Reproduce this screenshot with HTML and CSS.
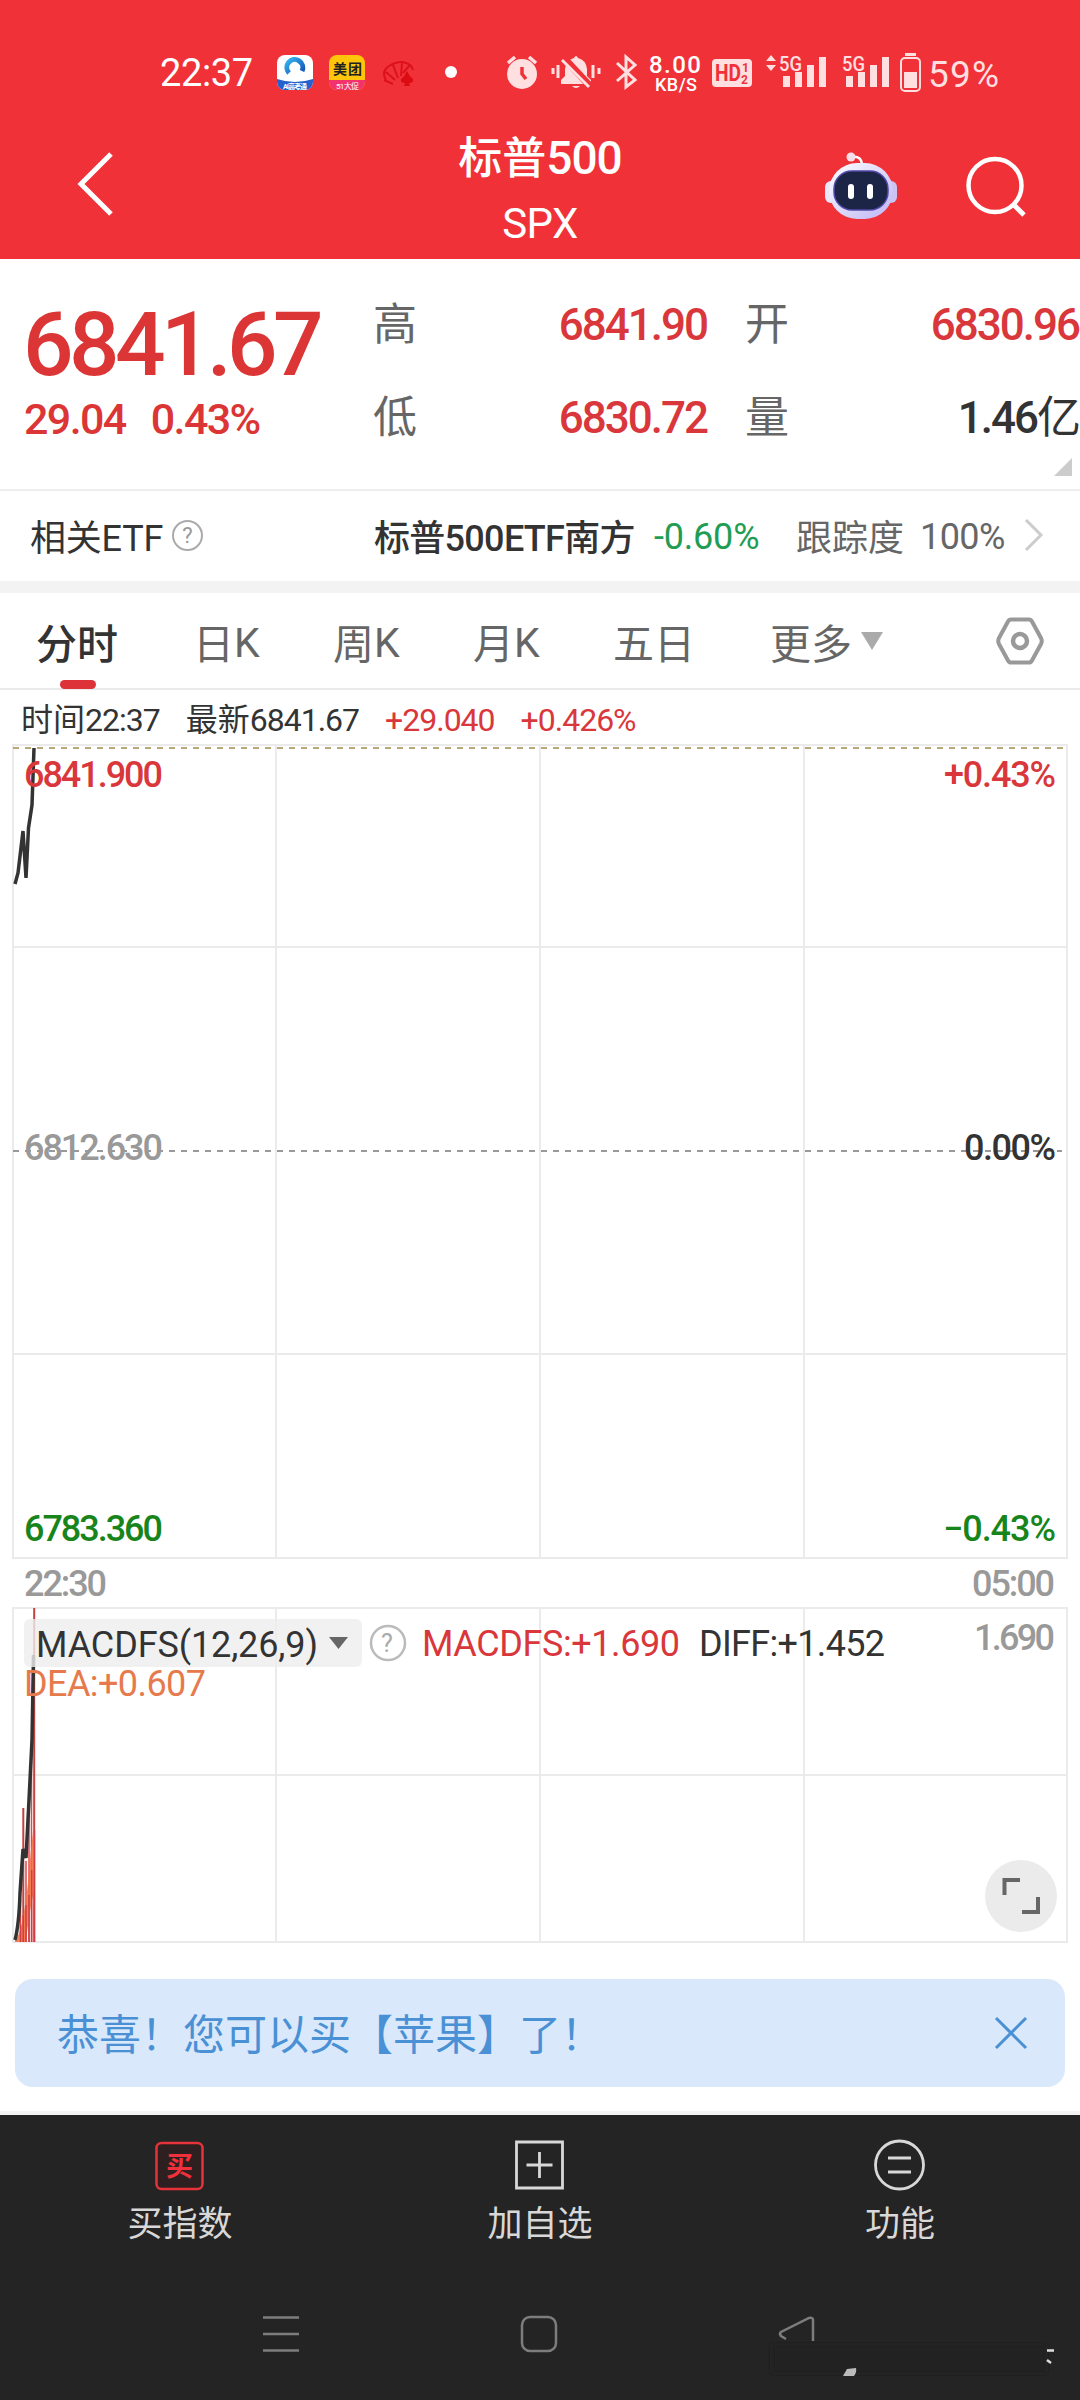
FILE: index.html
```html
<!DOCTYPE html>
<html lang="zh-CN">
<head>
    <meta charset="UTF-8">
    <meta name="viewport" content="width=device-width, initial-scale=1.0">
    <title>标普500 SPX</title>
    <link rel="stylesheet" href="styles.css">
</head>
<body>
    <header class="top">
        <svg class="status" width="1080" height="110" viewBox="0 0 1080 110">
            <defs>
                <linearGradient id="ring" x1="0" y1="0" x2="1" y2="1">
                    <stop offset="0" stop-color="#35b4ee"/>
                    <stop offset="1" stop-color="#1450b8"/>
                </linearGradient>
                <clipPath id="app1"><rect x="277" y="55" width="36" height="35" rx="8"/></clipPath>
                <clipPath id="app2"><rect x="329" y="55" width="36" height="35" rx="8"/></clipPath>
            </defs>
            <text x="160" y="86" font-size="38" fill="#fff" textLength="93">22:37</text>
            <g clip-path="url(#app1)">
                <rect x="277" y="55" width="36" height="35" fill="#fff"/>
                <path d="M277 79q18 6 36 0v12h-36z" fill="#2560cf"/>
                <path d="M289 73a8 8 0 1 1 13-2" fill="none" stroke="url(#ring)" stroke-width="5"/>
                <text x="283" y="89" font-size="7" font-weight="700" fill="#fff" textLength="24">AI高考通</text>
            </g>
            <g clip-path="url(#app2)">
                <rect x="329" y="55" width="36" height="35" fill="#fdc60b"/>
                <rect x="329" y="80" width="36" height="10" fill="#f2336b"/>
                <text x="333" y="74" font-size="14" font-weight="700" fill="#222" textLength="29">美团</text>
                <text x="336" y="89" font-size="8" fill="#fff" textLength="23">51大促</text>
            </g>
            <!-- shell with a spade -->
            <path d="M386 80q-5-9 3-14q10-6 17-3q6 2 7 7M393 84l-9-4M395 80l-9-8M398 78l-5-13M401 76l1-13M403 73l7-8" fill="none" stroke="#dc1119" stroke-width="2"/>
            <path d="M407 71q2 5 6 8q1 4-4 4l1 3h-6l1-3q-5 0-4-4q4-3 6-8z" fill="#dc0c14"/>
            <circle cx="451" cy="72" r="6" fill="#fff"/>
            <g class="pale">
                <!-- alarm -->
                <circle cx="522" cy="74" r="15"/>
                <path d="M508 63l7-6M536 63l-7-6" stroke="#ffdfe0" stroke-width="3.5"/>
                <path d="M522 67v7l4 5" stroke="#f13138" stroke-width="3.5" fill="none"/>
                <!-- muted bell -->
                <path d="M561 84v-4l4-4v-7q1-9 9-11q2-4 4 0q8 2 9 11v7l4 4v4zM572 86h8q-4 4-8 0z"/>
                <path d="M563 57l27 29" stroke="#f13138" stroke-width="7"/>
                <path d="M562 60l27 27M553 68v6M558 65v13M593 65v13M599 68v6" stroke="#ffdfe0" stroke-width="3"/>
                <!-- bluetooth -->
                <path d="M617 63l18 17l-9 7V57l9 8l-18 16" stroke="#ffdfe0" stroke-width="3" fill="none"/>
                <text x="649" y="73" font-size="24" font-weight="500" fill="#fff" textLength="52">8.00</text>
                <text x="655" y="91" font-size="18" font-weight="500" fill="#fff" textLength="42">KB/S</text>
                <rect x="712" y="59" width="40" height="28" rx="4"/>
                <text x="715" y="81" font-size="23" font-weight="700" fill="#f13138" textLength="26" lengthAdjust="spacingAndGlyphs">HD</text>
                <text x="742" y="72" font-size="12" font-weight="700" fill="#f13138">1</text>
                <text x="741" y="84" font-size="12" font-weight="700" fill="#f13138">2</text>
                <path d="M766 61l5-6l5 6zM766 65l5 6l5-6z"/>
                <text x="779" y="71" font-size="21" font-weight="500" textLength="23" lengthAdjust="spacingAndGlyphs">5G</text>
                <path d="M783 76h7v11h-7zM795 72h7v15h-7zM807 65h7v22h-7zM819 57h7v30h-7z"/>
                <text x="842" y="71" font-size="21" font-weight="500" textLength="23" lengthAdjust="spacingAndGlyphs">5G</text>
                <path d="M846 76h7v11h-7zM858 72h7v15h-7zM870 65h7v22h-7zM882 57h7v30h-7z"/>
                <rect x="901" y="58" width="19" height="33" rx="4" fill="none" stroke="#ffdfe0" stroke-width="2"/>
                <path d="M905 53h11v3h-11zM904 72h13v16h-13z"/>
                <text x="928" y="87" font-size="37" textLength="71">59%</text>
            </g>
        </svg>
        <div class="title-bar">
            <svg class="back" width="40" height="70" viewBox="0 0 40 70"><path d="M37 4L7 34l30 30" fill="none" stroke="#fff" stroke-width="5"/></svg>
            <div class="title">
                <h1>标普<span>500</span></h1>
                <p>SPX</p>
            </div>
            <svg class="robot" width="76" height="72" viewBox="0 0 76 72">
                <defs>
                    <linearGradient id="head" x1="0" y1="0" x2="1" y2="1">
                        <stop offset="0" stop-color="#fff"/>
                        <stop offset="1" stop-color="#bdb4f5"/>
                    </linearGradient>
                </defs>
                <path d="M28 7q11-2 11 9" fill="none" stroke="#fff" stroke-width="2.5"/>
                <circle cx="28" cy="7" r="4.5" fill="#f6dfe8"/>
                <rect x="2" y="31" width="12" height="22" rx="6" fill="#e9e6fb"/>
                <rect x="62" y="31" width="12" height="22" rx="6" fill="#c9c4f4"/>
                <rect x="6" y="13" width="64" height="56" rx="28" fill="url(#head)"/>
                <rect x="11" y="21" width="54" height="39" rx="18" fill="#1d2547" stroke="#5148a8" stroke-width="1.5"/>
                <rect x="25" y="34" width="6" height="15" rx="3" fill="#fff"/>
                <rect x="44" y="34" width="6" height="15" rx="3" fill="#fff"/>
            </svg>
            <svg class="search" width="64" height="64" viewBox="0 0 64 64"><circle cx="31" cy="31.500" r="26.500" fill="none" stroke="#fff" stroke-width="4.500"/><path d="M50 51l10 10" stroke="#fff" stroke-width="5"/></svg>
        </div>
    </header>

    <section class="quote">
        <div class="price-box">
            <div class="price">6841.67</div>
            <div class="change"><span>29.04</span><span>0.43%</span></div>
        </div>
        <dl class="stats">
            <dt>高</dt><dd class="red">6841.90</dd>
            <dt>开</dt><dd class="red">6830.96</dd>
            <dt>低</dt><dd class="red">6830.72</dd>
            <dt>量</dt><dd>1.46<span class="yi">亿</span></dd>
        </dl>
        <i class="more-corner"></i>
    </section>

    <section class="etf">
        <span class="etf-label">相关ETF</span>
        <span class="help">?</span>
        <b class="etf-name">标普500ETF南方</b>
        <span class="etf-rate">-0.60%</span>
        <span class="etf-track">跟踪度</span>
        <span class="etf-pct">100%</span>
        <svg width="24" height="36" viewBox="0 0 24 36"><path d="M2 3l15 15L2 33" fill="none" stroke="#ccc" stroke-width="3"/></svg>
    </section>

    <nav class="tabs">
        <a class="tab active">分时</a>
        <a class="tab">日<span>K</span></a>
        <a class="tab">周<span>K</span></a>
        <a class="tab">月<span>K</span></a>
        <a class="tab">五日</a>
        <a class="tab">更多<i class="caret"></i></a>
        <svg class="gear" width="50" height="50" viewBox="0 0 50 50"><path d="M16 3.500h18q2 0 3 2l9 16.500q1.500 3 0 6l-9 16.500q-1 2-3 2H16q-2 0-3-2L4 28q-1.500-3 0-6l9-16.500q1-2 3-2z" fill="none" stroke="#999" stroke-width="4"/><circle cx="25" cy="25" r="7" fill="none" stroke="#999" stroke-width="4.500"/></svg>
    </nav>

    <div class="info">
        <span>时间<span class="n">22:37</span></span>
        <span>最新<span class="n">6841.67</span></span>
        <span class="n red">+29.040</span>
        <span class="n red">+0.426%</span>
    </div>

    <svg class="chart" width="1080" height="1210" viewBox="0 743 1080 1210">
        <g class="grid">
            <path d="M13 745H1067V1558H13zM13 947H1067M13 1354H1067M276 745V1558M540 745V1558M804 745V1558"/>
            <path d="M13 1608H1067V1942H13zM13 1775H1067M276 1608V1942M540 1608V1942M804 1608V1942"/>
        </g>
        <path d="M13 748H1067" stroke="#b9a878" stroke-width="2" stroke-dasharray="6 6"/>
        <path d="M13 1151H1062" stroke="#999" stroke-width="2" stroke-dasharray="6 6"/>
        <path d="M15 884L18 873L23 831L26 878L28.500 828L32 805L34 748" class="line"/>

        <g class="axis">
            <text x="24" y="787" class="red" textLength="139">6841.900</text>
            <text x="944" y="787" class="red" textLength="112">+0.43%</text>
            <text x="24" y="1160" class="gray" textLength="139">6812.630</text>
            <text x="964" y="1160" textLength="92">0.00%</text>
            <text x="24" y="1541" class="green" textLength="139">6783.360</text>
            <text x="943" y="1541" class="green" textLength="113">−0.43%</text>
            <text x="24" y="1596" class="gray" textLength="83">22:30</text>
            <text x="972" y="1596" class="gray" textLength="83">05:00</text>
            <text x="974" y="1650" class="gray" textLength="81">1.690</text>
        </g>

        <path d="M20.500 1942V1900M26 1942V1861M29 1942V1810M31.500 1942V1745" stroke="#dc4a4a" stroke-width="1.500"/>
        <path d="M23.300 1942V1808M34.200 1942V1608" stroke="#c44141" stroke-width="2"/>
        <path d="M15 1940Q20 1935 22 1922Q27 1900 30 1860L34 1822V1890Q28 1920 26 1942H15z" fill="#f26f40" opacity=".85"/>
        <path d="M20.500 1942V1925M23.300 1942V1915M26 1942V1905M29 1942V1895M31.700 1942V1870M34.500 1942V1830" stroke="#cf3d45" stroke-width="1.400"/>
        <path d="M15 1940Q19 1925 20 1893L23 1849L26 1858L29 1800L32 1740L33.500 1655" class="line"/>
        <rect x="24" y="1619" width="338" height="48" rx="6" fill="#eee" opacity=".8"/>
        <text x="36" y="1657" textLength="282">MACDFS(12,26,9)</text>
        <path d="M329 1637h19l-9.500 12z" fill="#666"/>
        <circle cx="388" cy="1643" r="17" fill="none" stroke="#bbb" stroke-width="2.500"/>
        <text x="381" y="1652" class="q">?</text>
        <text x="422" y="1656" class="red" textLength="258">MACDFS:+1.690</text>
        <text x="699" y="1656" textLength="186">DIFF:+1.452</text>
        <text x="24" y="1696" class="orange" textLength="182">DEA:+0.607</text>

        <circle cx="1021" cy="1896" r="36" fill="#ebebeb"/>
        <path d="M1004.500 1895V1880H1020M1038 1897V1912H1022" fill="none" stroke="#666" stroke-width="4"/>
    </svg>

    <div class="notice">
        <span>恭喜！您可以买【苹果】了！</span>
        <svg width="34" height="34" viewBox="0 0 34 34"><path d="M2 2l30 30M32 2L2 32" stroke="#4a90d5" stroke-width="3"/></svg>
    </div>

    <footer class="bottom">
        <div class="actions">
            <a class="action">
                <svg width="52" height="54" viewBox="0 0 52 54"><rect x="2.500" y="5" width="46" height="46" rx="5" fill="#2e1f20" stroke="#e8323a" stroke-width="2.500"/><text x="12" y="38" font-size="27" font-weight="700" fill="#f0303a">买</text></svg>
                <span>买指数</span>
            </a>
            <a class="action">
                <svg width="52" height="54" viewBox="0 0 52 54"><path d="M2.500 4h46v46h-46zM25.500 14v26M12.500 27h26" fill="none" stroke="#d8d8d8" stroke-width="2.800"/></svg>
                <span>加自选</span>
            </a>
            <a class="action">
                <svg width="52" height="54" viewBox="0 0 52 54"><circle cx="25.500" cy="27" r="24" fill="none" stroke="#d8d8d8" stroke-width="2.800"/><path d="M14 20h23M14 34h23" stroke="#d8d8d8" stroke-width="2.800"/></svg>
                <span>功能</span>
            </a>
        </div>
        <svg class="navkeys" width="1080" height="120" viewBox="0 2280 1080 120">
            <defs>
                <filter id="soft"><feGaussianBlur stdDeviation="2"/></filter>
            </defs>
            <g fill="none" stroke="#7d7d7d" stroke-width="2.500">
                <path d="M263 2317.500h36M263 2334h36M263 2350.500h36"/>
                <rect x="522" y="2317" width="34" height="34" rx="8"/>
                <path d="M786 2339l-5-3q-2-2 0-4l28-14q4-1 4 2v21"/>
            </g>
            <rect x="772" y="2345" width="274" height="28" fill="#222" filter="url(#soft)"/>
            <path d="M843 2376l4-7l9-1q1 4-2 8z" fill="#bbb"/>
            <path d="M1047 2350.500h7M1047 2360l4 3" stroke="#ddd" stroke-width="2.500"/>
        </svg>
    </footer>
</body>
</html>
```
FILE: styles.css
```css
* {
    box-sizing: border-box;
}
body {
    margin: 0;
    width: 1080px;
    background-color: #fff;
    color: #333;
    font-family: Roboto, "Noto Sans CJK SC", sans-serif;
}
svg {
    display: block;
    flex: none;
}
svg text {
    font-family: Roboto, "Noto Sans CJK SC", sans-serif;
}
.n {
    letter-spacing: -1px;
}
.red {
    color: #d9373b;
    fill: #d9373b;
}

/* header */
.top {
    height: 259px;
    background-color: #f13138;
    color: #fff;
}
.pale {
    fill: #ffdfe0;
}
.title-bar {
    display: flex;
    height: 149px;
    padding-left: 74px;
}
.back {
    margin-top: 40px;
}
.title {
    width: 320px;
    margin-left: 266px;
    text-align: center;
}
.title h1 {
    margin: 16px 0 0;
    font-size: 44px;
    line-height: 64px;
    font-weight: 500;
}
.title h1 span {
    font-size: 46px;
    letter-spacing: -1px;
}
.title p {
    margin: 7px 0 0;
    font-size: 42px;
    line-height: 52px;
    letter-spacing: -0.5px;
}
.robot {
    margin: 40px 0 0 123px;
}
.search {
    margin: 44px 0 0 65px;
}

/* quote */
.quote {
    position: relative;
    display: flex;
    height: 232px;
    border-bottom: 2px solid #eee;
}
.price-box {
    width: 374px;
    padding: 36px 0 0 23px;
    color: #dc3535;
}
.price {
    font-size: 89px;
    line-height: 100px;
    font-weight: 500;
    letter-spacing: -4.6px;
}
.change {
    display: flex;
    gap: 25px;
    padding-left: 1px;
    font-size: 43px;
    line-height: 48px;
    font-weight: 500;
    letter-spacing: -1.6px;
}
.stats {
    display: grid;
    grid-template-columns: 44px 289px 83px 289px;
    grid-template-rows: 93px 93px;
    margin: 20px 0 0;
    font-size: 44px;
    line-height: 93px;
}
.stats dt {
    margin-left: -1px;
    color: #666;
}
.stats dt:nth-of-type(even) {
    padding-left: 39px;
}
.stats dd {
    margin: 0;
    text-align: right;
    font-weight: 500;
    letter-spacing: -2px;
}
.yi {
    font-weight: 400;
}
.more-corner {
    position: absolute;
    right: 8px;
    bottom: 13px;
    border: 9px solid #ccc;
    border-top-color: transparent;
    border-left-color: transparent;
}

/* related ETF */
.etf {
    display: flex;
    align-items: center;
    height: 102px;
    padding: 0 0 3px 30px;
    border-bottom: 12px solid #f3f3f3;
    font-size: 36px;
}
.etf-label {
    width: 142px;
    letter-spacing: -0.2px;
}
.help {
    width: 31px;
    height: 31px;
    margin-top: 2px;
    border: 2px solid #aaa;
    border-radius: 50%;
    color: #999;
    font-size: 22px;
    line-height: 28px;
    text-align: center;
}
.etf-name {
    width: 280px;
    margin-left: 171px;
    font-weight: 500;
    letter-spacing: -0.7px;
}
.etf-rate {
    width: 142px;
    padding-top: 5px;
    color: #1f9d55;
    letter-spacing: -0.2px;
}
.etf-track,
.etf-pct {
    color: #666;
}
.etf-pct {
    width: 104px;
    padding-top: 5px;
    margin-left: 16px;
    letter-spacing: -0.6px;
}

/* period tabs */
.tabs {
    display: flex;
    align-items: center;
    height: 97px;
    padding-left: 36px;
    border-bottom: 2px solid #eaeaea;
    font-size: 41px;
    color: #666;
}
.tab {
    position: relative;
    display: flex;
    align-items: center;
    height: 95px;
    margin-right: 75px;
}
.tab span {
    padding-top: 4px;
    letter-spacing: -1.7px;
}
.active {
    color: #333;
    font-weight: 500;
}
.active::after {
    content: "";
    position: absolute;
    left: 24px;
    bottom: -1px;
    width: 36px;
    height: 9px;
    border-radius: 5px;
    background-color: #dc3238;
}
.caret {
    margin: 1px 0 0 9px;
    border: 11px solid transparent;
    border-top: 18px solid #aaa;
    border-bottom: 0;
}
.gear {
    margin-left: 37px;
}
.info {
    display: flex;
    gap: 26px;
    height: 53px;
    padding-left: 21px;
    font-size: 32px;
    line-height: 60px;
}

/* charts */
.chart {
    font-size: 36px;
    fill: #333;
}
.axis {
    font-weight: 500;
}
.grid {
    fill: none;
    stroke: #ebebeb;
    stroke-width: 2;
}
.line {
    fill: none;
    stroke: #333;
    stroke-width: 3.5;
}
.gray {
    fill: #999;
}
.green {
    fill: #17851b;
}
.orange {
    fill: #e67a4c;
}
.q {
    fill: #aaa;
    font-size: 25px;
}

/* notice */
.notice {
    display: flex;
    align-items: center;
    justify-content: space-between;
    height: 108px;
    margin: 26px 15px 24px;
    padding: 0 37px 0 42px;
    border-radius: 18px;
    background-color: #d9e8fa;
    color: #4a90d5;
    font-size: 42px;
}
.notice span {
    margin-top: -4px;
}

/* bottom bar */
.bottom {
    height: 289px;
    border-top: 4px solid #f3f3f3;
    background-color: #242424;
}
.actions {
    display: grid;
    grid-template-columns: repeat(3, 1fr);
    height: 165px;
}
.action {
    display: flex;
    flex-direction: column;
    align-items: center;
    padding-top: 23px;
    color: #d8d8d8;
    font-size: 35px;
    line-height: 50px;
}
.action span {
    margin-top: 8px;
}
```
